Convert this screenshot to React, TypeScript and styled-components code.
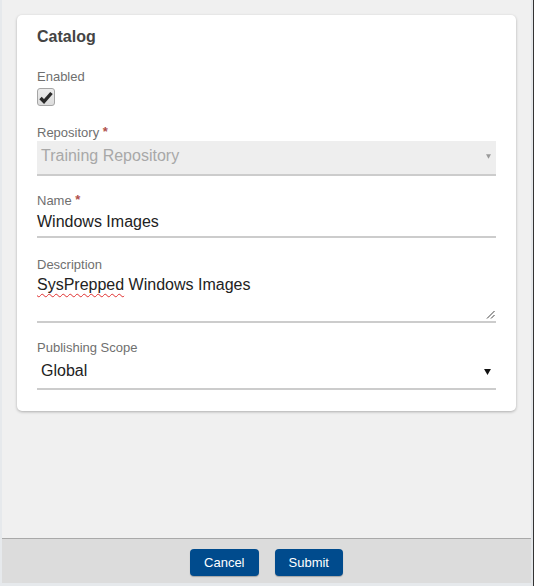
import styled, { createGlobalStyle } from 'styled-components';

const GlobalStyle = createGlobalStyle`
  html, body {
    margin: 0;
    padding: 0;
    background: #f0f0f0;
  }
  body {
    font-family: "Liberation Sans", Arial, sans-serif;
  }
`;

type FieldProps = {
  label: string;
  required?: boolean;
  gap: number;
  children: React.ReactNode;
};

const Field = ({ label, required, gap, children }: FieldProps) => (
  <FieldGroup $gap={gap}>
    <Label>
      {label}
      {required && <Required> *</Required>}
    </Label>
    {children}
  </FieldGroup>
);

const CaretIcon = ({ muted }: { muted?: boolean }) => (
  <Caret viewBox="0 0 8 7" $muted={muted}>
    <path d="M0 0 H8 L4 7 Z" />
  </Caret>
);

const App = () => {
  return (
    <>
      <GlobalStyle />
      <Window>
        <EdgeLeft />
        <Main>
          <Content>
            <Card>
              <Title>Catalog</Title>
              <Label>Enabled</Label>
              <Checkbox>
                <svg width="14" height="13" viewBox="0 0 14 13">
                  <path
                    d="M1.5 7 L5 10.5 L12.5 2"
                    fill="none"
                    stroke="#2a2a2a"
                    strokeWidth="3.4"
                    strokeLinejoin="miter"
                  />
                </svg>
              </Checkbox>

              <Field label="Repository" required gap={17}>
                <SelectBox $disabled $height={33}>
                  <span>Training Repository</span>
                  <CaretIcon muted />
                </SelectBox>
              </Field>

              <Field label="Name" required gap={15}>
                <TextInput>Windows Images</TextInput>
              </Field>

              <Field label="Description" gap={18}>
                <TextArea>
                  <Misspelled>SysPrepped</Misspelled> Windows Images
                  <Grip viewBox="0 0 9 8">
                    <path d="M1 7.5 L8.5 0 M5 7.5 L8.5 4" stroke="#444" strokeWidth="1" />
                  </Grip>
                </TextArea>
              </Field>

              <Field label="Publishing Scope" gap={16}>
                <SelectBox $height={32}>
                  <span>Global</span>
                  <CaretIcon />
                </SelectBox>
              </Field>
            </Card>
          </Content>
          <Footer>
            <Button>Cancel</Button>
            <Button>Submit</Button>
          </Footer>
          <EdgeBottom />
        </Main>
        <EdgeRight />
      </Window>
    </>
  );
};

const Window = styled.div`
  display: flex;
  width: 535px;
  height: 586px;
  background: #f0f0f0;
`;

const EdgeLeft = styled.div`
  width: 2px;
  flex: none;
  background: #e6e9ec;
`;

const EdgeRight = styled.div`
  width: 4px;
  flex: none;
  background: linear-gradient(to right, #e3e6e9 0 2px, #333 2px 3px, #fff 3px);
`;

const EdgeBottom = styled.div`
  height: 3px;
  flex: none;
  background: #e6e9ec;
`;

const Main = styled.div`
  flex: 1;
  display: flex;
  flex-direction: column;
  min-width: 0;
`;

const Content = styled.div`
  flex: 1;
  padding: 15px 15px 0;
`;

const Card = styled.div`
  background: #fff;
  border-radius: 5px;
  box-shadow: 0 1px 3px rgba(0, 0, 0, 0.28);
  padding: 13px 20px 21px;
`;

const Title = styled.h3`
  margin: 0 0 22px;
  font-size: 16px;
  line-height: 18px;
  font-weight: bold;
  color: #444;
`;

const Label = styled.div`
  font-size: 13px;
  line-height: 17px;
  color: #6f6f6f;
`;

const Required = styled.span`
  color: #b0504c;
  font-weight: bold;
  vertical-align: 1px;
`;

const Checkbox = styled.div`
  margin-top: 3px;
  width: 16px;
  height: 16px;
  border: 1px solid #a5a5a5;
  border-radius: 3px;
  background: linear-gradient(#ececec, #dcdcdc);
  display: flex;
  align-items: center;
  justify-content: center;
`;

const FieldGroup = styled.div<{ $gap: number }>`
  margin-top: ${({ $gap }) => $gap}px;
`;

const SelectBox = styled.div<{ $disabled?: boolean; $height: number }>`
  display: flex;
  align-items: center;
  justify-content: space-between;
  height: ${({ $height }) => $height}px;
  padding: 0 5px 0 4px;
  font-size: 16px;
  color: ${({ $disabled }) => ($disabled ? '#a8a8a8' : '#222')};
  background: ${({ $disabled }) => ($disabled ? '#eeeeee' : '#fff')};
  border-bottom: 2px solid #cccccc;
  span {
    padding-bottom: 3px;
  }
`;

const Caret = styled.svg<{ $muted?: boolean }>`
  width: ${({ $muted }) => ($muted ? 5 : 7)}px;
  height: ${({ $muted }) => ($muted ? 5 : 6)}px;
  fill: ${({ $muted }) => ($muted ? '#9a9a9a' : '#111')};
  margin-top: ${({ $muted }) => ($muted ? -3 : 0)}px;
`;

const TextInput = styled.div`
  height: 27px;
  line-height: 25px;
  font-size: 16px;
  color: #222;
  border-bottom: 2px solid #cccccc;
`;

const TextArea = styled.div`
  position: relative;
  height: 46px;
  padding-top: 2px;
  line-height: 20px;
  font-size: 16px;
  color: #222;
  border-bottom: 2px solid #cccccc;
`;

const Misspelled = styled.span`
  text-decoration: underline wavy #e03030;
  text-decoration-thickness: 1px;
  text-underline-offset: 3px;
`;

const Grip = styled.svg`
  position: absolute;
  right: 1px;
  bottom: 2px;
  width: 9px;
  height: 8px;
`;

const Footer = styled.div`
  flex: none;
  height: 45px;
  border-top: 1px solid #a9a9a9;
  background: #dcdcdc;
  display: flex;
  justify-content: center;
  align-items: flex-start;
  gap: 16px;
  padding-top: 10px;
  box-sizing: border-box;
`;

const Button = styled.button`
  height: 27px;
  padding: 0 14px;
  border: none;
  border-radius: 4px;
  background: #004b8d;
  color: #fff;
  font-family: "Liberation Sans", Arial, sans-serif;
  font-size: 13px;
  box-shadow: 0 1px 1px rgba(0, 0, 0, 0.25);
  cursor: pointer;
`;

export default App;
